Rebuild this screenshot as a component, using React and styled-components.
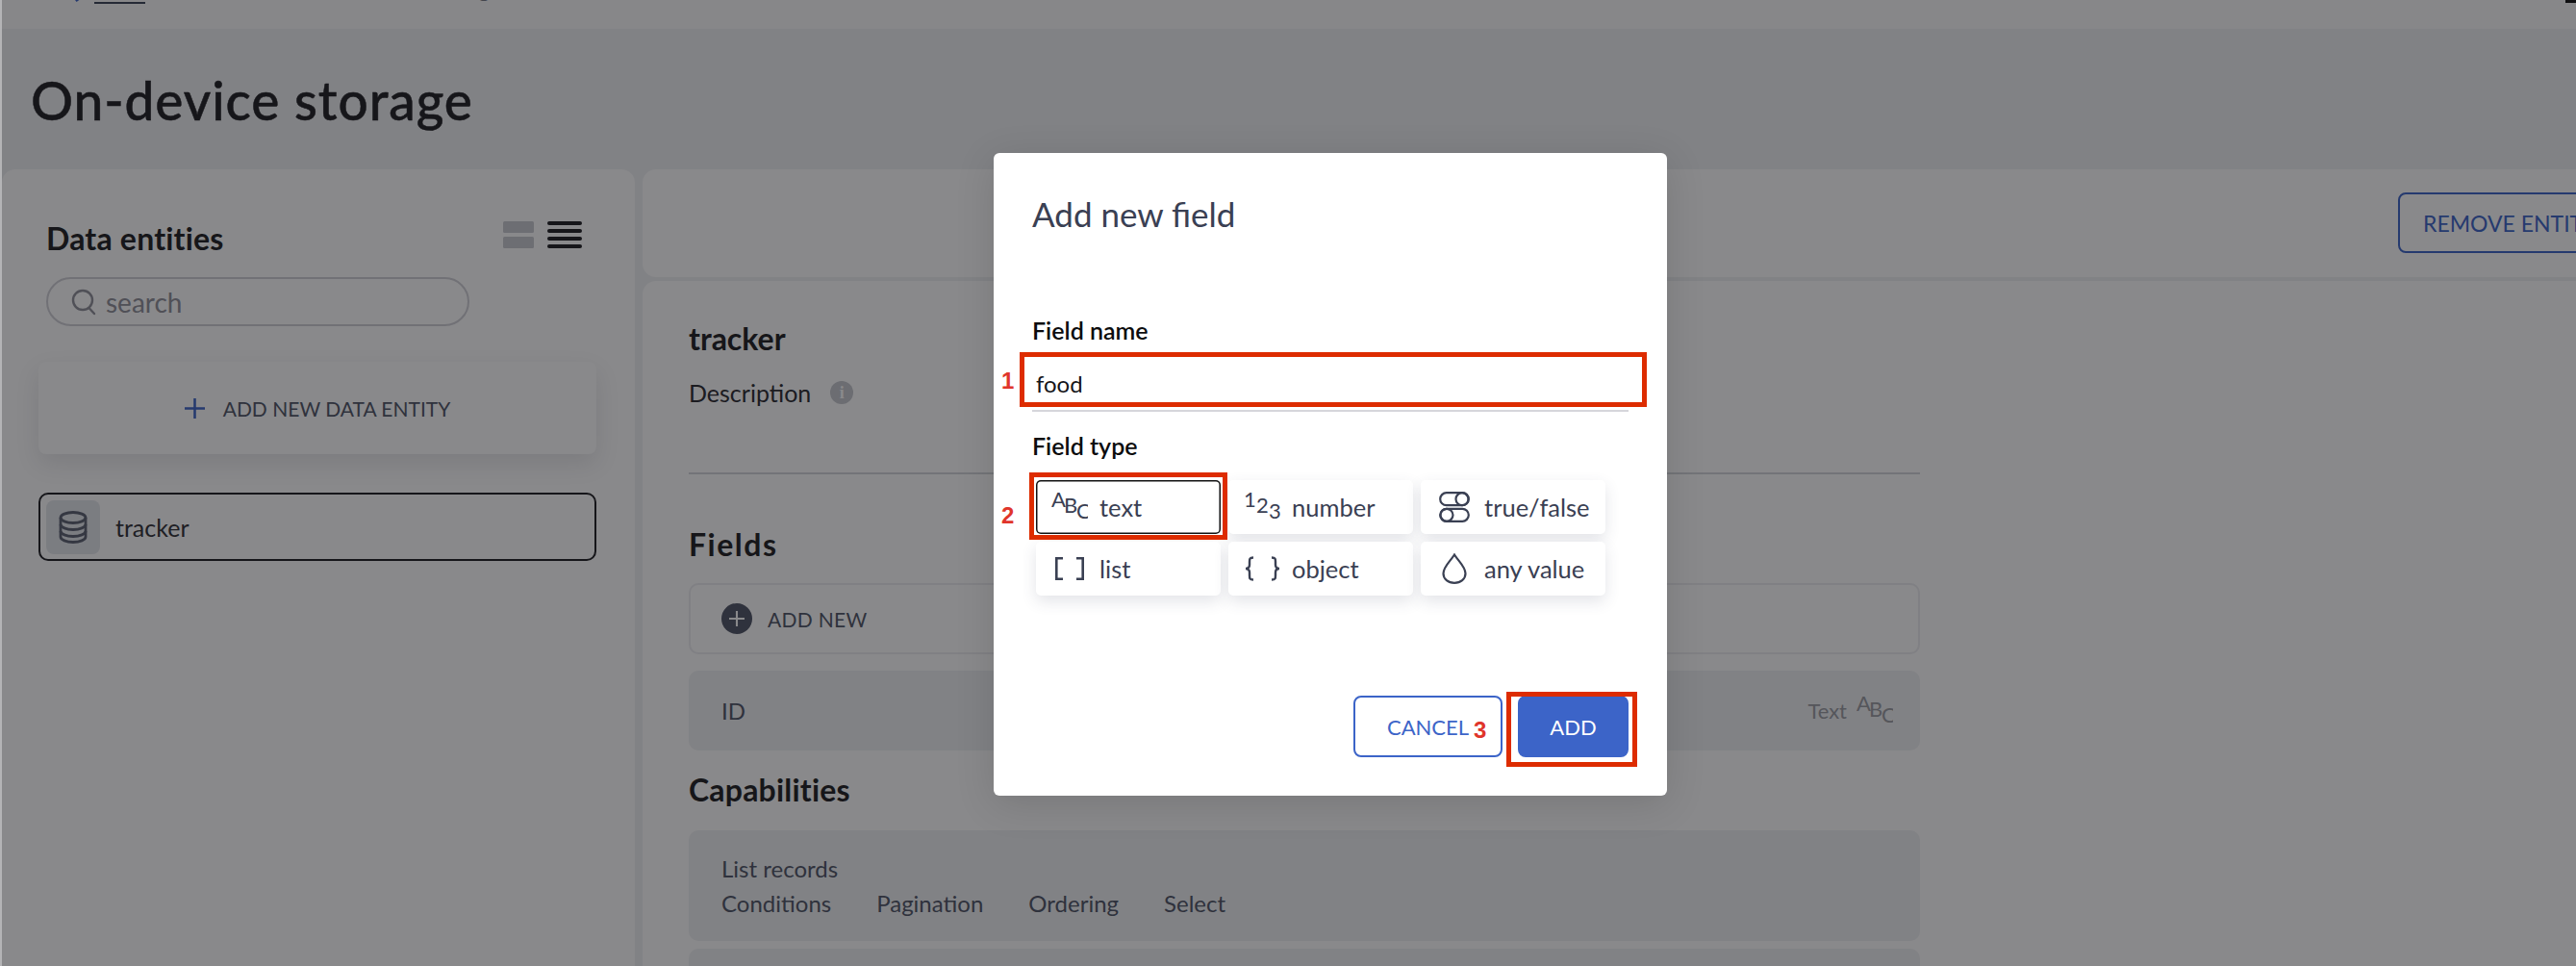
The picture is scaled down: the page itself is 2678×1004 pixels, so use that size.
import React from "react";
import styled, { createGlobalStyle } from "styled-components";

const GlobalStyle = createGlobalStyle`
  html, body {
    margin: 0;
    padding: 0;
    background: #f1f1f3;
  }
  * {
    box-sizing: border-box;
  }
`;

const Page = styled.div`
  position: relative;
  width: 2678px;
  height: 1004px;
  overflow: hidden;
  background: #f0f1f3;
  border-left: 2px solid #b4b4b6;
  font-family: Lato, "Open Sans", sans-serif;
  color: #1c1c20;
`;

const TopBar = styled.div`
  height: 30px;
  background: #fbfbfc;
  display: flex;
  align-items: flex-start;
  justify-content: space-between;
  padding-left: 72px;
  overflow: hidden;
`;

const Crumbs = styled.div`
  display: flex;
  align-items: flex-end;
  gap: 10px;
  height: 4px;
  font-size: 24px;
  line-height: 30px;
  color: #777a84;
`;

const CrumbLink = styled.span`
  display: block;
  width: 53px;
  height: 4px;
  margin-left: 2px;
  border-bottom: 2px solid #3c4356;
`;

const CrumbPath = styled.span`
  margin-left: 6px;
  white-space: nowrap;
  transform: translateY(-1px);
`;

const CornerMark = styled.div`
  width: 11px;
  height: 3px;
  background: #111;
`;

const Header = styled.div`
  height: 146px;
  display: flex;
  align-items: center;
  padding: 2px 0 0 30px;
`;

const Title = styled.h1`
  margin: 0;
  font-size: 55px;
  font-weight: 500;
  line-height: 60px;
  letter-spacing: 0.9px;
  color: #1e1e22;
  -webkit-text-stroke: 0.5px #1e1e22;
`;

const Columns = styled.div`
  display: grid;
  grid-template-columns: 658px 1fr;
  gap: 8px;
`;

const Sidebar = styled.aside`
  height: 900px;
  background: #fff;
  border-radius: 14px 14px 0 0;
  padding: 54px 40px 0 38px;
`;

const SidebarHead = styled.div`
  display: flex;
  justify-content: space-between;
  align-items: flex-start;
  padding: 0 15px 0 8px;
  height: 58px;
`;

const SectionTitle = styled.h2`
  margin: 0;
  font-size: 32px;
  font-weight: 700;
  line-height: 36px;
  letter-spacing: 0.2px;
  color: #1e1e22;
`;

const ViewIcons = styled.div`
  display: flex;
  gap: 14px;
`;

const SearchBox = styled.div`
  margin-left: 8px;
  width: 440px;
  height: 51px;
  border: 2px solid #d0d0d6;
  border-radius: 26px;
  display: flex;
  align-items: center;
  gap: 10px;
  padding-left: 24px;
  font-size: 28px;
  color: #8f9099;
`;

const AddEntityCard = styled.div`
  margin-top: 37px;
  height: 96px;
  border-radius: 8px;
  background: #fff;
  box-shadow: 0 10px 24px rgba(40, 44, 60, 0.12);
  display: flex;
  align-items: center;
  justify-content: center;
  gap: 19px;
  font-size: 21px;
  color: #4f5566;
`;

const EntityRow = styled.div`
  margin-top: 40px;
  height: 71px;
  border: 2px solid #1e1e22;
  border-radius: 10px;
  display: flex;
  align-items: center;
  gap: 16px;
  padding-left: 6px;
  font-size: 25px;
  color: #303036;
`;

const EntityIcon = styled.div`
  width: 56px;
  height: 56px;
  border-radius: 8px;
  background: #e4e7ec;
  display: flex;
  align-items: center;
  justify-content: center;
`;

const MainColumn = styled.main`
  display: flex;
  flex-direction: column;
  gap: 4px;
  min-width: 0;
`;

const ActionCard = styled.div`
  height: 112px;
  background: #fff;
  border-radius: 14px 0 0 14px;
  padding: 24px 0 0 1825px;
`;

const RemoveButton = styled.button`
  width: 280px;
  height: 63px;
  border: 2px solid #3c64c8;
  border-radius: 8px;
  background: #fff;
  color: #3c64c8;
  font: 400 23px Lato, sans-serif;
  text-align: left;
  padding-left: 24px;
`;

const DetailPanel = styled.section`
  background: #fff;
  border-radius: 14px 0 0 0;
  height: 800px;
  padding: 42px 682px 0 48px;
`;

const EntityName = styled.h3`
  margin: 0;
  font-size: 32px;
  font-weight: 700;
  line-height: 36px;
  color: #1e1e22;
`;

const DescriptionRow = styled.div`
  display: flex;
  align-items: center;
  gap: 20px;
  margin-top: 21px;
  font-size: 25px;
  line-height: 34px;
  color: #2a2a30;
`;

const InfoDot = styled.span`
  width: 24px;
  height: 24px;
  border-radius: 50%;
  background: #c6c8ce;
  color: #fff;
  font: 700 18px/24px "Liberation Serif", serif;
  text-align: center;
`;

const Divider = styled.div`
  margin-top: 66px;
  height: 2px;
  background: #d5d6da;
`;

const FieldsTitle = styled(SectionTitle)`
  margin-top: 55px;
  letter-spacing: 1.5px;
`;

const AddFieldBox = styled.div`
  margin-top: 22px;
  height: 74px;
  border: 2px solid #eeeef1;
  border-radius: 10px;
  display: flex;
  align-items: center;
  gap: 16px;
  padding-left: 32px;
  font-size: 21px;
  letter-spacing: 0.3px;
  color: #4f5566;
`;

const PlusDot = styled.span`
  width: 32px;
  height: 32px;
  border-radius: 50%;
  background: #4f5566;
  display: flex;
  align-items: center;
  justify-content: center;
`;

const IdRow = styled.div`
  margin-top: 17px;
  height: 83px;
  border-radius: 10px;
  background: #f0f1f3;
  display: flex;
  align-items: center;
  justify-content: space-between;
  padding: 0 28px 0 34px;
  font-size: 24px;
  color: #4f5566;
`;

const TypeTag = styled.span`
  display: flex;
  align-items: center;
  gap: 10px;
  font-size: 22px;
  color: #9a9ba2;
`;

const CapabilitiesTitle = styled(SectionTitle)`
  margin-top: 23px;
`;

const CapabilityRow = styled.div`
  margin-top: ${(p) => p.$gap}px;
  height: 115px;
  border-radius: 10px;
  background: #f0f1f3;
  padding: 22px 34px 0;
  font-size: 24px;
  line-height: 36px;
  color: #4f5566;
`;

const CapabilityList = styled.div`
  display: flex;
  gap: 47px;
`;

const Overlay = styled.div`
  position: absolute;
  inset: 0;
  background: rgba(14, 14, 18, 0.49);
  padding: 159px 0 0 1031px;
`;

const Modal = styled.div`
  position: relative;
  width: 700px;
  height: 668px;
  background: #fff;
  border-radius: 6px;
  box-shadow: 0 8px 40px rgba(0, 0, 0, 0.13);
  padding: 43px 40px 0;
`;

const ModalTitle = styled.h2`
  margin: 0;
  font-size: 35px;
  font-weight: 400;
  line-height: 40px;
  color: #3a4053;
`;

const Label = styled.div`
  font-size: 25px;
  font-weight: 600;
  line-height: 30px;
  color: #0c0c0e;
`;

const FieldNameLabel = styled(Label)`
  margin-top: 86px;
`;

const NameInput = styled.div`
  height: 60px;
  margin-top: 10px;
  border-bottom: 2px solid #d6d6db;
  padding: 16px 0 0 4px;
  font-size: 24px;
  line-height: 30px;
  color: #16161a;
`;

const FieldTypeLabel = styled(Label)`
  margin-top: 20px;
`;

const TypeGrid = styled.div`
  margin: 21px 0 0 4px;
  display: grid;
  grid-template-columns: repeat(3, 192px);
  grid-auto-rows: 56px;
  gap: 8px;
`;

const TypeOption = styled.div`
  display: flex;
  align-items: center;
  background: #fff;
  border-radius: 5px;
  box-shadow: ${(p) =>
    p.$selected ? "inset 0 0 0 1.5px #111" : "0 6px 16px rgba(60, 66, 90, 0.14)"};
  font-size: 25.5px;
  color: #3a4053;
`;

const IconSlot = styled.span`
  width: 66px;
  padding-left: 4px;
  display: flex;
  justify-content: center;
  flex-shrink: 0;
`;

const ModalFooter = styled.div`
  display: flex;
  justify-content: flex-end;
  gap: 16px;
  margin-top: 104px;
`;

const FooterButton = styled.button`
  height: 64px;
  width: ${(p) => p.$width}px;
  border-radius: 8px;
  border: 2px solid #3c64c8;
  background: ${(p) => (p.$primary ? "#3c64c8" : "#fff")};
  color: ${(p) => (p.$primary ? "#fff" : "#3c64c8")};
  font: 400 22px Lato, sans-serif;
`;

const Callout = styled.div`
  position: absolute;
  left: ${(p) => p.$left}px;
  top: ${(p) => p.$top}px;
  width: ${(p) => p.$width}px;
  height: ${(p) => p.$height}px;
  border: 5px solid #dd2c00;
  pointer-events: none;
`;

const CalloutNumber = styled.span`
  position: absolute;
  left: ${(p) => p.$left}px;
  top: ${(p) => p.$top}px;
  font: 700 24px/24px "Liberation Sans", sans-serif;
  color: #e0352b;
`;

const Chevron = () => (
  <svg width="12" height="8" viewBox="0 0 12 8">
    <path d="M1 -3 L7 5" stroke="#3c64c8" strokeWidth="3.5" fill="none" />
  </svg>
);

const SplitViewIcon = () => (
  <svg width="32" height="28" viewBox="0 0 32 28">
    <rect x="0" y="0" width="32" height="12" rx="1.5" fill="#c9cad0" />
    <rect x="0" y="16" width="32" height="12" rx="1.5" fill="#c9cad0" />
  </svg>
);

const ListViewIcon = () => (
  <svg width="36" height="28" viewBox="0 0 36 28">
    {[0, 8, 16, 24].map((y) => (
      <rect key={y} x="0" y={y} width="36" height="4" rx="2" fill="#1e1e22" />
    ))}
  </svg>
);

const SearchIcon = () => (
  <svg width="26" height="28" viewBox="0 0 26 28" fill="none" stroke="#8f9099" strokeWidth="2.4">
    <circle cx="12" cy="12" r="10" />
    <path d="M18.5 20 L24 26" strokeLinecap="round" />
  </svg>
);

const PlusIcon = ({ size, color, weight }) => (
  <svg width={size} height={size} viewBox="0 0 20 20" stroke={color} strokeWidth={weight}>
    <path d="M10 0 V20 M0 10 H20" />
  </svg>
);

const DatabaseIcon = () => (
  <svg width="30" height="34" viewBox="0 0 30 34" fill="none" stroke="#5a6070" strokeWidth="2.8">
    <ellipse cx="15" cy="7" rx="13" ry="5.5" />
    <path d="M2 7 V27 C2 30 8 32.5 15 32.5 S28 30 28 27 V7" />
    <path d="M2 14 C2 17 8 19.5 15 19.5 S28 17 28 14" />
    <path d="M2 21 C2 24 8 26.5 15 26.5 S28 24 28 21" />
  </svg>
);

const StaggerIcon = ({ chars, color = "#3a4053" }) => (
  <svg width="38" height="34" viewBox="0 0 38 34" fontFamily="Lato, sans-serif" fontSize="22" fill={color}>
    <text x="0" y="17">{chars[0]}</text>
    <text x="13" y="23">{chars[1]}</text>
    <text x="26" y="29">{chars[2]}</text>
  </svg>
);

const SwitchIcon = () => (
  <svg width="32" height="32" viewBox="0 0 32 32" fill="none" stroke="#3a4053" strokeWidth="2.2">
    <rect x="1.2" y="1.2" width="29.6" height="13" rx="6.5" />
    <circle cx="24" cy="7.7" r="6.5" />
    <rect x="1.2" y="17.8" width="29.6" height="13" rx="6.5" />
    <circle cx="8" cy="24.3" r="6.5" />
  </svg>
);

const BracketsIcon = () => (
  <svg width="30" height="24" viewBox="0 0 30 24" fill="none" stroke="#3a4053" strokeWidth="2.6">
    <path d="M8 1.3 H1.3 V22.7 H8" />
    <path d="M22 1.3 H28.7 V22.7 H22" />
  </svg>
);

const BracesIcon = () => (
  <svg width="37" height="26" viewBox="0 0 37 26" fill="none" stroke="#3a4053" strokeWidth="2.4">
    <path d="M9 1.5 C5 1.5 5 3 5 6 V9 C5 11 4 13 1 13 C4 13 5 15 5 17 V20 C5 23 5 24.5 9 24.5" />
    <path d="M28 1.5 C32 1.5 32 3 32 6 V9 C32 11 33 13 36 13 C33 13 32 15 32 17 V20 C32 23 32 24.5 28 24.5" />
  </svg>
);

const DropIcon = () => (
  <svg width="26" height="32" viewBox="0 0 26 32" fill="none" stroke="#3a4053" strokeWidth="2.2">
    <path d="M13 1.5 C9 8 1.5 14 1.5 21 C1.5 27 6.5 30.8 13 30.8 S24.5 27 24.5 21 C24.5 14 17 8 13 1.5 Z" />
  </svg>
);

const fieldTypes = [
  { label: "text", icon: <StaggerIcon chars="ABC" />, selected: true },
  { label: "number", icon: <StaggerIcon chars="123" /> },
  { label: "true/false", icon: <SwitchIcon /> },
  { label: "list", icon: <BracketsIcon /> },
  { label: "object", icon: <BracesIcon /> },
  { label: "any value", icon: <DropIcon /> },
];

export default function App() {
  return (
    <Page>
      <GlobalStyle />
      <TopBar>
        <Crumbs>
          <Chevron />
          <CrumbLink />
          <CrumbPath>/ Data model / On-device storage</CrumbPath>
        </Crumbs>
        <CornerMark />
      </TopBar>
      <Header>
        <Title>On-device storage</Title>
      </Header>
      <Columns>
        <Sidebar>
          <SidebarHead>
            <SectionTitle>Data entities</SectionTitle>
            <ViewIcons>
              <SplitViewIcon />
              <ListViewIcon />
            </ViewIcons>
          </SidebarHead>
          <SearchBox>
            <SearchIcon />
            search
          </SearchBox>
          <AddEntityCard>
            <PlusIcon size={21} color="#3c64c8" weight={2.4} />
            ADD NEW DATA ENTITY
          </AddEntityCard>
          <EntityRow>
            <EntityIcon>
              <DatabaseIcon />
            </EntityIcon>
            tracker
          </EntityRow>
        </Sidebar>
        <MainColumn>
          <ActionCard>
            <RemoveButton>REMOVE ENTITY</RemoveButton>
          </ActionCard>
          <DetailPanel>
            <EntityName>tracker</EntityName>
            <DescriptionRow>
              Description
              <InfoDot>i</InfoDot>
            </DescriptionRow>
            <Divider />
            <FieldsTitle>Fields</FieldsTitle>
            <AddFieldBox>
              <PlusDot>
                <PlusIcon size={16} color="#fff" weight={2.6} />
              </PlusDot>
              ADD NEW
            </AddFieldBox>
            <IdRow>
              ID
              <TypeTag>
                Text
                <StaggerIcon chars="ABC" color="#9a9ba2" />
              </TypeTag>
            </IdRow>
            <CapabilitiesTitle>Capabilities</CapabilitiesTitle>
            <CapabilityRow $gap={24}>
              List records
              <CapabilityList>
                <span>Conditions</span>
                <span>Pagination</span>
                <span>Ordering</span>
                <span>Select</span>
              </CapabilityList>
            </CapabilityRow>
            <CapabilityRow $gap={8} />
          </DetailPanel>
        </MainColumn>
      </Columns>
      <Overlay>
        <Modal>
          <ModalTitle>Add new field</ModalTitle>
          <FieldNameLabel>Field name</FieldNameLabel>
          <NameInput>food</NameInput>
          <FieldTypeLabel>Field type</FieldTypeLabel>
          <TypeGrid>
            {fieldTypes.map((type) => (
              <TypeOption key={type.label} $selected={type.selected}>
                <IconSlot>{type.icon}</IconSlot>
                {type.label}
              </TypeOption>
            ))}
          </TypeGrid>
          <ModalFooter>
            <FooterButton $width={155}>CANCEL</FooterButton>
            <FooterButton $width={115} $primary>ADD</FooterButton>
          </ModalFooter>
          <Callout $left={27} $top={207} $width={652} $height={57} />
          <CalloutNumber $left={8} $top={225}>1</CalloutNumber>
          <Callout $left={37} $top={332} $width={206} $height={70} />
          <CalloutNumber $left={8} $top={365}>2</CalloutNumber>
          <Callout $left={533} $top={560} $width={136} $height={78} />
          <CalloutNumber $left={499} $top={588}>3</CalloutNumber>
        </Modal>
      </Overlay>
    </Page>
  );
}
